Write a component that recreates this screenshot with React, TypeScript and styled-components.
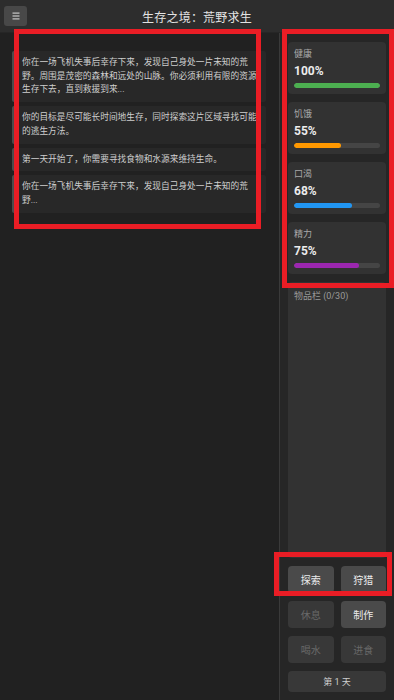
import { FC } from "react";
import styled, { createGlobalStyle } from "styled-components";

const GlobalStyle = createGlobalStyle`
  html, body {
    margin: 0;
    padding: 0;
    background: #212121;
  }
  * {
    box-sizing: border-box;
  }
  body {
    font-family: Roboto, "Noto Sans CJK SC", "Noto Sans", sans-serif;
    color: #ddd;
  }
`;

const Screen = styled.div`
  position: relative;
  width: 394px;
  height: 700px;
  display: flex;
  flex-direction: column;
  overflow: hidden;
  background: #212121;
`;

const Header = styled.header`
  height: 33px;
  flex-shrink: 0;
  display: grid;
  grid-template-columns: 1fr auto 1fr;
  align-items: center;
  padding: 0 4px;
  background: #2d2d2d;
  border-bottom: 1px solid #262626;
`;

const MenuButton = styled.button`
  justify-self: start;
  width: 23px;
  height: 20px;
  padding: 0;
  border: none;
  border-radius: 3px;
  background: #484848;
  display: flex;
  align-items: center;
  justify-content: center;
  cursor: pointer;
`;

const Title = styled.h1`
  margin: 0;
  font-size: 12px;
  font-weight: 400;
  color: #e2e2e2;
  letter-spacing: 0.2px;
`;

const Body = styled.div`
  flex: 1;
  display: flex;
  min-height: 0;
`;

const LogPanel = styled.section`
  width: 280px;
  flex-shrink: 0;
  padding: 18px 13px 12px 12px;
  border-right: 1px solid #3a3a3a;
  display: flex;
  flex-direction: column;
  gap: 4px;
`;

const LogEntry = styled.p`
  margin: 0;
  padding: 5px 6px 5px 8px;
  background: #282828;
  border-left: 2px solid #4c4c4c;
  border-radius: 2px;
  font-size: 8.7px;
  line-height: 13.7px;
  color: #cfcfcf;
`;

const Sidebar = styled.aside`
  flex: 1;
  padding: 9px 8px 8px;
  display: flex;
  flex-direction: column;
  gap: 8px;
  background: #262626;
`;

const StatCard = styled.div`
  height: 52px;
  flex-shrink: 0;
  padding: 6px;
  border-radius: 4px;
  background: #323232;
`;

const StatLabel = styled.div`
  font-size: 9px;
  line-height: 12px;
  color: #a8a8a8;
`;

const StatValue = styled.div`
  margin-top: 3px;
  font-size: 12px;
  line-height: 16px;
  font-weight: 700;
  color: #ececec;
`;

const BarTrack = styled.div`
  margin-top: 4px;
  height: 5px;
  border-radius: 3px;
  background: #454545;
  overflow: hidden;
`;

const BarFill = styled.div<{ $color: string }>`
  height: 100%;
  border-radius: 3px;
  background: ${(p) => p.$color};
`;

const Inventory = styled.div`
  flex: 1;
  padding: 8px 6px;
  border-radius: 4px;
  background: #323232;
`;

const InventoryLabel = styled.div`
  font-size: 9px;
  line-height: 12px;
  color: #9a9a9a;
`;

const ActionGrid = styled.div`
  display: grid;
  grid-template-columns: 1fr 1fr;
  column-gap: 7px;
  row-gap: 8px;
`;

const ActionButton = styled.button<{ $disabled?: boolean }>`
  height: 27px;
  padding: 0;
  border: none;
  border-radius: 4px;
  font-family: inherit;
  font-size: 10px;
  background: ${(p) => (p.$disabled ? "#383838" : "#4a4a4a")};
  color: ${(p) => (p.$disabled ? "#686868" : "#ececec")};
  cursor: ${(p) => (p.$disabled ? "default" : "pointer")};
`;

const DayBar = styled.div`
  grid-column: 1 / span 2;
  height: 21px;
  border-radius: 4px;
  background: #383838;
  display: flex;
  align-items: center;
  justify-content: center;
  font-size: 9px;
  color: #cfcfcf;
`;

const Highlight = styled.div<{ $x: number; $y: number; $w: number; $h: number }>`
  position: absolute;
  left: ${(p) => p.$x}px;
  top: ${(p) => p.$y}px;
  width: ${(p) => p.$w}px;
  height: ${(p) => p.$h}px;
  border: 5px solid #ea1d25;
  pointer-events: none;
`;

const logs = [
  "你在一场飞机失事后幸存下来，发现自己身处一片未知的荒野。周围是茂密的森林和远处的山脉。你必须利用有限的资源生存下去，直到救援到来...",
  "你的目标是尽可能长时间地生存，同时探索这片区域寻找可能的逃生方法。",
  "第一天开始了，你需要寻找食物和水源来维持生命。",
  "你在一场飞机失事后幸存下来，发现自己身处一片未知的荒野...",
];

const stats = [
  { label: "健康", value: 100, color: "#4caf50" },
  { label: "饥饿", value: 55, color: "#ff9800" },
  { label: "口渴", value: 68, color: "#2196f3" },
  { label: "精力", value: 75, color: "#9c27b0" },
];

const actions = [
  { label: "探索", disabled: false },
  { label: "狩猎", disabled: false },
  { label: "休息", disabled: true },
  { label: "制作", disabled: false },
  { label: "喝水", disabled: true },
  { label: "进食", disabled: true },
];

const MenuIcon: FC = () => (
  <svg width="8" height="8" viewBox="0 0 8 8">
    <rect x="0.5" y="0.5" width="7" height="1.2" fill="#c8c8c8" />
    <rect x="0.5" y="3.4" width="7" height="1.2" fill="#c8c8c8" />
    <rect x="0.5" y="6.3" width="7" height="1.2" fill="#c8c8c8" />
  </svg>
);

const App: FC = () => {
  return (
    <>
      <GlobalStyle />
      <Screen>
        <Header>
          <MenuButton aria-label="menu">
            <MenuIcon />
          </MenuButton>
          <Title>生存之境：荒野求生</Title>
        </Header>
        <Body>
          <LogPanel>
            {logs.map((text, i) => (
              <LogEntry key={i}>{text}</LogEntry>
            ))}
          </LogPanel>
          <Sidebar>
            {stats.map((s) => (
              <StatCard key={s.label}>
                <StatLabel>{s.label}</StatLabel>
                <StatValue>{s.value}%</StatValue>
                <BarTrack>
                  <BarFill $color={s.color} style={{ width: `${s.value}%` }} />
                </BarTrack>
              </StatCard>
            ))}
            <Inventory>
              <InventoryLabel>物品栏 (0/30)</InventoryLabel>
            </Inventory>
            <ActionGrid>
              {actions.map((a) => (
                <ActionButton key={a.label} $disabled={a.disabled}>
                  {a.label}
                </ActionButton>
              ))}
              <DayBar>第 1 天</DayBar>
            </ActionGrid>
          </Sidebar>
        </Body>
        <Highlight $x={14} $y={29} $w={247} $h={200} />
        <Highlight $x={282} $y={29} $w={112} $h={259} />
        <Highlight $x={274} $y={552} $w={118} $h={44} />
      </Screen>
    </>
  );
};

export default App;
